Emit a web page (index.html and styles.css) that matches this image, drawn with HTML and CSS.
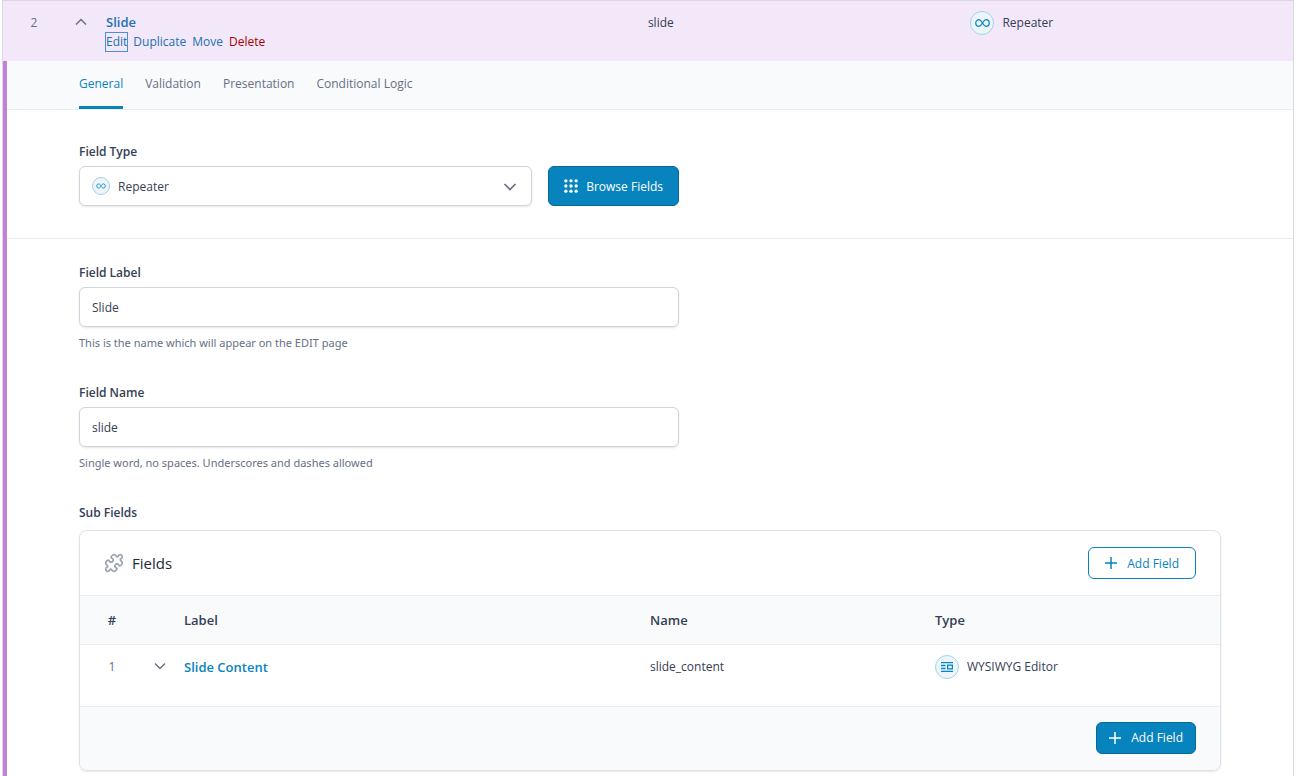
FILE: index.html
```html
<!DOCTYPE html>
<html lang="en">
<head>
    <meta charset="UTF-8">
    <meta name="viewport" content="width=device-width, initial-scale=1.0">
    <title>Edit Field Group</title>
    <link rel="stylesheet" href="styles.css">
</head>
<body>

    <div class="field-object">

        <!-- Field row -->
        <div class="field-row">
            <div class="row-order">2</div>
            <button class="toggle" type="button" aria-label="Collapse field">
                <svg width="12" height="8" viewBox="0 0 12 8"><path d="M1 6.5 6 1.5l5 5"/></svg>
            </button>
            <div class="row-label">
                <a class="row-title" href="#">Slide</a>
                <div class="row-options">
                    <a class="focused" href="#">Edit</a>
                    <a href="#">Duplicate</a>
                    <a href="#">Move</a>
                    <a class="delete" href="#">Delete</a>
                </div>
            </div>
            <div class="row-name">slide</div>
            <div class="field-type">
                <span class="type-icon">
                    <svg width="15" height="10" viewBox="0 0 16 10"><path d="M8 5C6.800 2.900 5.900 1.500 4.300 1.500a3.500 3.500 0 0 0 0 7C5.900 8.500 6.800 7.100 8 5s2.100-3.500 3.700-3.500a3.500 3.500 0 0 1 0 7C10.100 8.500 9.200 7.100 8 5z"/></svg>
                </span>
                Repeater
            </div>
        </div>

        <!-- Field settings -->
        <div class="settings">
            <nav class="tabs">
                <a class="tab active" href="#">General</a>
                <a class="tab" href="#">Validation</a>
                <a class="tab" href="#">Presentation</a>
                <a class="tab" href="#">Conditional Logic</a>
            </nav>

            <div class="section section-type">
                <label for="field-type">Field Type</label>
                <div class="type-controls">
                    <div class="select-wrap">
                        <span class="type-icon small">
                            <svg width="10" height="6" viewBox="0 0 16 10"><path d="M8 5C6.800 2.900 5.900 1.500 4.300 1.500a3.500 3.500 0 0 0 0 7C5.900 8.500 6.800 7.100 8 5s2.100-3.500 3.700-3.500a3.500 3.500 0 0 1 0 7C10.100 8.500 9.200 7.100 8 5z"/></svg>
                        </span>
                        <select id="field-type">
                            <option>Repeater</option>
                        </select>
                        <svg class="select-arrow" width="14" height="8" viewBox="0 0 14 8"><path d="M1.500 1 7 6.500 12.500 1"/></svg>
                    </div>
                    <button class="btn btn-primary btn-browse" type="button">
                        <svg class="dots" width="14" height="14" viewBox="0 0 15 15">
                            <circle cx="2" cy="2" r="1.800"/><circle cx="7.500" cy="2" r="1.800"/><circle cx="13" cy="2" r="1.800"/>
                            <circle cx="2" cy="7.500" r="1.800"/><circle cx="7.500" cy="7.500" r="1.800"/><circle cx="13" cy="7.500" r="1.800"/>
                            <circle cx="2" cy="13" r="1.800"/><circle cx="7.500" cy="13" r="1.800"/><circle cx="13" cy="13" r="1.800"/>
                        </svg>
                        Browse Fields
                    </button>
                </div>
            </div>

            <div class="section">
                <div class="setting">
                    <label for="field-label">Field Label</label>
                    <input type="text" id="field-label" value="Slide">
                    <p class="hint">This is the name which will appear on the EDIT page</p>
                </div>

                <div class="setting">
                    <label for="field-name">Field Name</label>
                    <input type="text" id="field-name" value="slide">
                    <p class="hint">Single word, no spaces. Underscores and dashes allowed</p>
                </div>

                <h3 class="sub-heading">Sub Fields</h3>
                <div class="sub-fields">
                    <div class="sub-header">
                        <h2>
                            <svg class="puzzle" width="20" height="20" viewBox="0 0 24 24"><path d="M19.439 7.850c-.049.322.059.648.289.878l1.568 1.568c.470.470.706 1.087.706 1.704s-.235 1.233-.706 1.704l-1.611 1.611a.980.980 0 0 1-.837.276c-.470-.070-.802-.480-.968-.925a2.501 2.501 0 1 0-3.214 3.214c.446.166.855.497.925.968a.979.979 0 0 1-.276.837l-1.610 1.610a2.404 2.404 0 0 1-1.705.707 2.402 2.402 0 0 1-1.704-.706l-1.568-1.568a1.026 1.026 0 0 0-.877-.290c-.493.074-.840.504-1.020.968a2.500 2.500 0 1 1-3.237-3.237c.464-.180.894-.527.967-1.020a1.026 1.026 0 0 0-.289-.877l-1.568-1.568A2.402 2.402 0 0 1 1.998 12c0-.617.236-1.234.706-1.704L4.230 8.770c.240-.240.581-.353.917-.303.515.077.877.528 1.073 1.010a2.500 2.500 0 1 0 3.259-3.259c-.482-.196-.933-.558-1.010-1.073-.050-.336.062-.676.303-.917l1.525-1.525A2.402 2.402 0 0 1 12 1.998c.617 0 1.234.236 1.704.706l1.568 1.568c.230.230.556.338.877.290.493-.074.840-.504 1.020-.968a2.500 2.500 0 1 1 3.237 3.237c-.464.180-.894.527-.967 1.020Z"/></svg>
                            Fields
                        </h2>
                        <button class="btn btn-outline" type="button">
                            <svg width="12" height="12" viewBox="0 0 12 12"><path d="M6 0v12M0 6h12"/></svg>
                            Add Field
                        </button>
                    </div>

                    <table>
                        <colgroup>
                            <col class="col-order">
                            <col class="col-toggle">
                            <col>
                            <col class="col-quarter">
                            <col class="col-quarter">
                        </colgroup>
                        <thead>
                            <tr>
                                <th class="order">#</th>
                                <th></th>
                                <th>Label</th>
                                <th>Name</th>
                                <th>Type</th>
                            </tr>
                        </thead>
                        <tbody>
                            <tr>
                                <td class="order">1</td>
                                <td>
                                    <button class="toggle" type="button" aria-label="Expand field">
                                        <svg width="12" height="8" viewBox="0 0 12 8"><path d="M1 1.500 6 6.500l5-5"/></svg>
                                    </button>
                                </td>
                                <td><a class="row-title" href="#">Slide Content</a></td>
                                <td>slide_content</td>
                                <td>
                                    <div class="field-type">
                                        <span class="type-icon">
                                            <svg width="12" height="10" viewBox="0 0 12 10"><path d="M0 .600h12M0 3.500h4.500M0 6.500h4.500M0 9.400h12M6.600 3.100h4.800v3.800H6.600z"/></svg>
                                        </span>
                                        WYSIWYG Editor
                                    </div>
                                </td>
                            </tr>
                        </tbody>
                    </table>

                    <div class="sub-footer">
                        <button class="btn btn-primary" type="button">
                            <svg width="12" height="12" viewBox="0 0 12 12"><path d="M6 0v12M0 6h12"/></svg>
                            Add Field
                        </button>
                    </div>
                </div>
            </div>
        </div>
    </div>

</body>
</html>
```
FILE: styles.css
```css
* {
    box-sizing: border-box;
}
body {
    font-family: 'Segoe UI', 'Open Sans', 'Noto Sans', sans-serif;
    font-size: 12px;
    line-height: 20px;
    color: #344054;
    background-color: #fff;
    margin: 0;
    padding: 0 2px;
}
a {
    color: #2271b1;
    text-decoration: none;
}
svg {
    display: block;
    flex: none;
    fill: none;
    stroke: currentColor;
}
.field-object {
    border: 1px solid #dcd6e4;
    border-bottom: none;
}

/* Field row */
.field-row {
    display: grid;
    grid-template-columns: 62px 41px 168fr 100fr 100fr;
    align-items: start;
    min-height: 60px;
    padding-top: 10px;
    background-color: #f3e8f9;
}
.row-order {
    text-align: center;
    color: #667085;
    padding: 2px 0;
}
.toggle {
    display: flex;
    align-items: center;
    height: 22px;
    padding: 0 10px;
    border: none;
    background: none;
    color: #667085;
    cursor: pointer;
}
.toggle svg {
    stroke-width: 1.5;
}
.row-title {
    display: block;
    font-size: 13px;
    font-weight: 600;
    color: #0783be;
}
.row-label .row-title {
    line-height: 22px;
    color: #2271b1;
}
.row-options {
    display: flex;
    gap: 6px;
    line-height: 18px;
}
.row-options .focused {
    outline: 1px solid #4a90d9;
}
.row-options .delete {
    color: #a00;
}
.row-name {
    padding: 2px 0;
}
.field-type {
    display: flex;
    align-items: center;
    gap: 8px;
}
.type-icon {
    display: flex;
    align-items: center;
    justify-content: center;
    width: 24px;
    height: 24px;
    border: 1px solid #a5d2e7;
    border-radius: 50%;
    background-color: #ebf5fa;
    color: #0783be;
}
.type-icon svg {
    stroke-width: 1.3;
}

/* Settings */
.settings {
    border-left: 4px solid #bf83d3;
}
.tabs {
    display: flex;
    gap: 22px;
    padding: 0 72px;
    background-color: #f9fafb;
    border-bottom: 1px solid #eaecf0;
}
.tab {
    height: 48px;
    padding-top: 13px;
    color: #667085;
}
.tab.active {
    color: #0783be;
    border-bottom: 3px solid #0783be;
}
.section {
    padding: 24px 72px 6px;
}
.section-type {
    padding-top: 32px;
    padding-bottom: 32px;
    border-bottom: 1px solid #eaecf0;
}
label,
.sub-heading {
    display: block;
    margin: 0 0 4px;
    font-size: 12px;
    font-weight: 600;
    line-height: 20px;
    color: #344054;
}
.sub-heading {
    margin-bottom: 7px;
}
.type-controls {
    display: flex;
    gap: 16px;
    max-width: 600px;
}
.select-wrap {
    position: relative;
    flex: 1;
}
select,
input[type="text"] {
    display: block;
    width: 100%;
    max-width: 600px;
    height: 40px;
    padding: 0 12px;
    border: 1px solid #d0d5dd;
    border-radius: 6px;
    background-color: #fff;
    box-shadow: 0 1px 2px rgba(16, 24, 40, 0.1);
    color: #344054;
    font-family: inherit;
    font-size: 12px;
}
select {
    appearance: none;
    padding-left: 38px;
}
.type-icon.small {
    position: absolute;
    top: 11px;
    left: 13px;
    width: 18px;
    height: 18px;
}
.select-arrow {
    position: absolute;
    top: 17px;
    right: 15px;
    color: #667085;
    stroke-width: 1.7;
    pointer-events: none;
}
.setting {
    margin-bottom: 30px;
}
.hint {
    margin: 6px 0 0;
    font-family: 'Segoe UI', 'Noto Sans', sans-serif;
    font-size: 11px;
    color: #667085;
}

/* Buttons */
.btn {
    display: flex;
    align-items: center;
    gap: 10px;
    height: 32px;
    border: 1px solid #0783be;
    border-radius: 6px;
    font-family: inherit;
    font-size: 12px;
    white-space: nowrap;
    cursor: pointer;
}
.btn svg {
    stroke-width: 1.5;
}
.btn-primary {
    padding: 0 12px;
    background-color: #0783be;
    border-color: #066998;
    color: #fff;
}
.btn-outline {
    padding: 0 16px;
    background-color: #fff;
    color: #0783be;
}
.btn-browse {
    gap: 8px;
    height: 40px;
    padding: 0 15px;
}
.btn .dots {
    fill: currentColor;
    stroke: none;
}

/* Sub fields */
.sub-fields {
    border: 1px solid #dde1e8;
    border-radius: 8px;
    overflow: hidden;
    box-shadow: 0 1px 2px rgba(16, 24, 40, 0.1);
}
.sub-header {
    display: flex;
    align-items: center;
    justify-content: space-between;
    padding: 16px 24px;
}
.sub-header h2 {
    display: flex;
    align-items: center;
    gap: 8px;
    margin: 0;
    font-size: 15px;
    font-weight: 400;
    color: #1d2939;
}
.puzzle {
    color: #98a2b3;
    stroke-width: 2;
}
table {
    width: 100%;
    table-layout: fixed;
    border-collapse: collapse;
}
.col-order {
    width: 64px;
}
.col-toggle {
    width: 40px;
}
.col-quarter {
    width: 25%;
}
th {
    height: 49px;
    padding: 0;
    border-top: 1px solid #eaecf0;
    background-color: #f9fafb;
    font-size: 13px;
    font-weight: 600;
    text-align: left;
}
td {
    height: 61px;
    padding: 10px 0;
    border-top: 1px solid #eaecf0;
    vertical-align: top;
    line-height: 24px;
}
.order {
    text-align: center;
}
td.order {
    color: #667085;
}
.sub-footer {
    display: flex;
    justify-content: flex-end;
    padding: 15px 24px 16px;
    border-top: 1px solid #eaecf0;
    background-color: #f9fafb;
}
```
